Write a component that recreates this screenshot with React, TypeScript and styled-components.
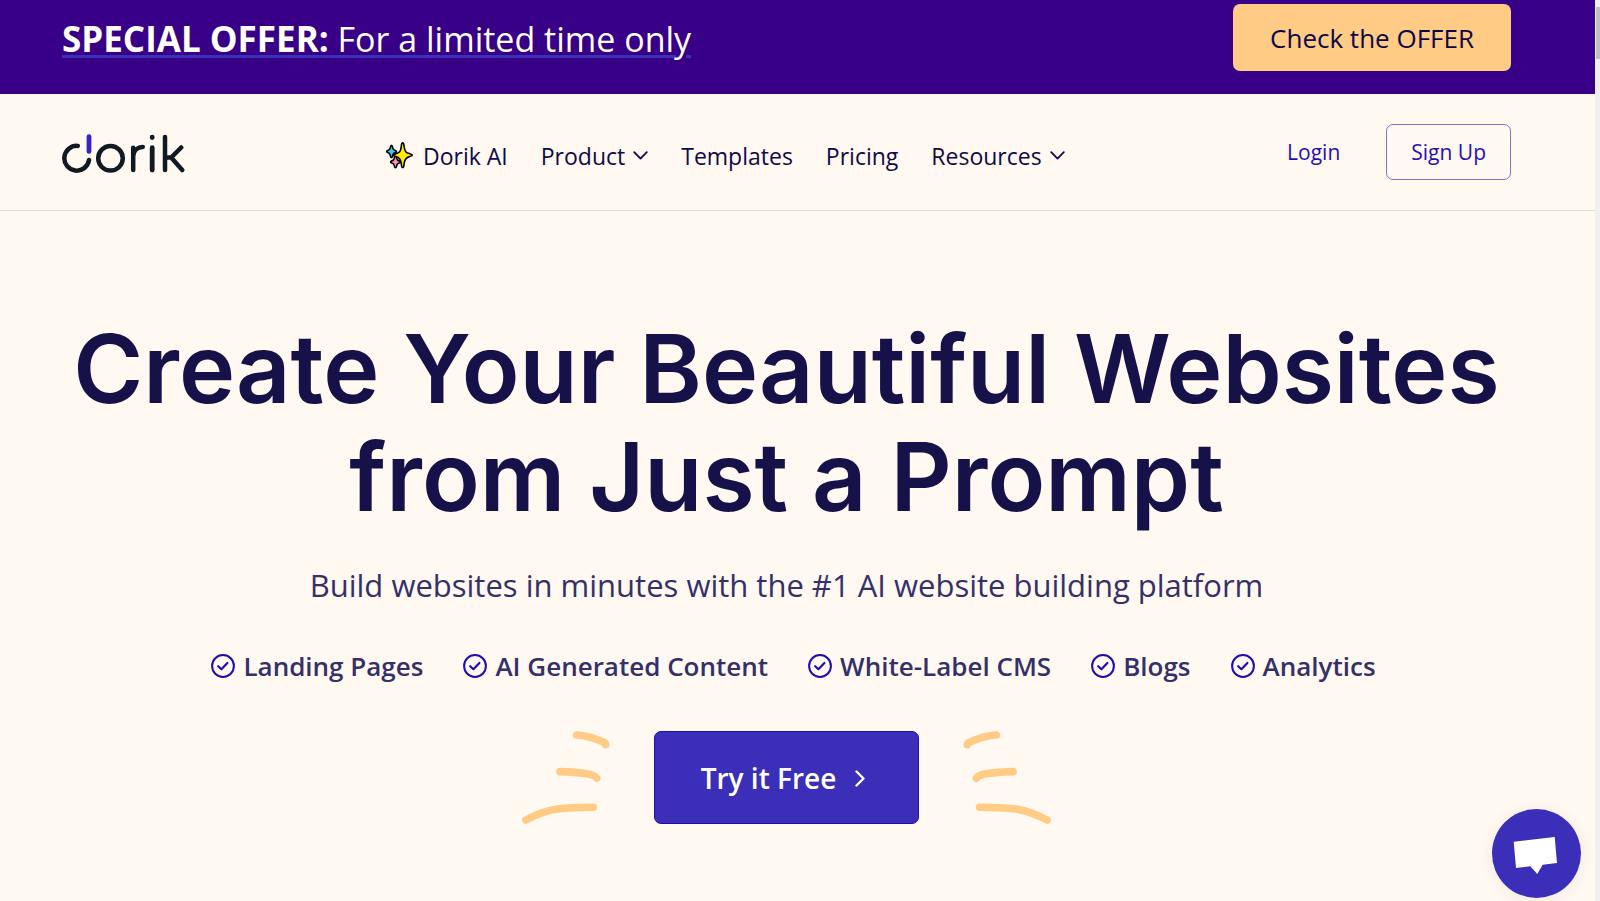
import React from "react";
import styled, { createGlobalStyle } from "styled-components";

const colors = {
  cream: "#fff9f2",
  banner: "#380086",
  brand: "#3b2fb9",
  link: "#1f10b8",
  ink: "#17114a",
  muted: "#35306a",
  amber: "#ffcb85",
};

const GlobalStyle = createGlobalStyle`
  *, *::before, *::after { box-sizing: border-box; }
  body {
    margin: 0;
    background: ${colors.cream};
    color: ${colors.ink};
    font-family: "Open Sans", "Noto Sans", sans-serif;
  }
  a { color: inherit; text-decoration: none; }
  button { font-family: inherit; cursor: pointer; }
`;

const Shell = styled.div`
  display: grid;
  grid-template-columns: minmax(0, 1fr) 5px;
  min-height: 100vh;
`;

const Page = styled.div`
  display: flex;
  flex-direction: column;
`;

const ScrollTrack = styled.div`
  padding: 7px 0 0 1px;
  background: #f0f0f1;
`;

const ScrollThumb = styled.div`
  height: 52px;
  background: #c1c1c1;
`;

const Banner = styled.div`
  display: flex;
  align-items: center;
  justify-content: space-between;
  padding: 4px 84px 23px 62px;
  background: ${colors.banner};
`;

const OfferLink = styled.a`
  padding-top: 2px;
  color: #fff;
  font-size: 34px;
  line-height: 48px;
  text-decoration: underline;
  text-decoration-color: ${colors.brand};
  text-decoration-thickness: 3px;
  text-underline-offset: 3px;
  white-space: nowrap;

  strong {
    font-size: 35px;
    font-weight: 700;
  }
`;

const OfferButton = styled.button`
  padding: 2px 37px 0;
  border: 0;
  border-radius: 7px;
  background: ${colors.amber};
  color: #0d0845;
  font-size: 26px;
  line-height: 65px;
  white-space: nowrap;
`;

const Header = styled.header`
  display: flex;
  align-items: center;
  padding: 30px 84px 30px 62px;
  border-bottom: 1px solid #dddbe0;
`;

const LogoLink = styled.a`
  display: flex;
  padding-top: 2px;
`;

const Nav = styled.nav`
  display: flex;
  align-items: center;
  gap: 33px;
  margin-left: 200px;
  padding-top: 7px;
  white-space: nowrap;
`;

const NavLink = styled.a`
  display: flex;
  align-items: center;
  gap: 8px;
  color: #0f0a48;
  font-size: 23px;
  line-height: 32px;
`;

const Actions = styled.div`
  display: flex;
  align-items: center;
  gap: 46px;
  margin-left: auto;
  color: ${colors.link};
  font-size: 21px;
  white-space: nowrap;
`;

const SignUp = styled.a`
  padding: 0 24px;
  border: 1px solid #7d74cf;
  border-radius: 7px;
  line-height: 54px;
`;

const Hero = styled.main`
  display: flex;
  flex-direction: column;
  align-items: center;
  padding: 104px 84px 0 62px;
  text-align: center;
`;

const Title = styled.h1`
  margin: 0;
  font-family: Inter, sans-serif;
  font-size: 95px;
  font-weight: 600;
  line-height: 108px;
  white-space: nowrap;
`;

const Subtitle = styled.p`
  margin: 30px 0 39px;
  color: ${colors.muted};
  font-size: 31px;
  line-height: 48px;
`;

const FeatureList = styled.ul`
  display: flex;
  gap: 40px;
  margin: 0;
  padding: 0 0 0 14px;
  list-style: none;
`;

const Feature = styled.li`
  display: flex;
  align-items: center;
  gap: 8px;
  color: ${colors.muted};
  font-size: 26px;
  font-weight: 600;
  line-height: 36px;
  white-space: nowrap;
`;

const CtaRow = styled.div`
  display: flex;
  align-items: center;
  gap: 44px;
  margin-top: 47px;
`;

const CtaButton = styled.button`
  display: flex;
  align-items: center;
  gap: 19px;
  padding: 2px 53px 0 46px;
  border: 1px solid #1d0fb0;
  border-radius: 7px;
  background: ${colors.brand};
  color: #fff;
  font-size: 28px;
  font-weight: 600;
  line-height: 89px;
  white-space: nowrap;
`;

const RaysSvg = styled.svg<{ $flipped?: boolean }>`
  transform: ${(p) => (p.$flipped ? "scaleX(-1)" : "none")};
`;

const ChatButton = styled.button`
  position: fixed;
  right: 19px;
  bottom: 3px;
  width: 89px;
  height: 89px;
  padding: 0;
  border: 0;
  border-radius: 50%;
  background: ${colors.brand};
  box-shadow: 0 2px 16px rgba(60, 40, 20, 0.08);
`;

const Logo = () => (
  <svg width="124" height="40" viewBox="0.8 0 124 40" fill="none" stroke="#111a22" strokeWidth="4.5" strokeLinecap="round" aria-hidden="true">
    <path d="M16.6 12.9A12.4 12.4 0 1 0 27.8 27" />
    <path d="M27.8 3.6V18.4" stroke="#3a22c4" strokeWidth="4.8" />
    <circle cx="49.3" cy="25.3" r="12.3" />
    <path d="M72 14.7V37M72 23C72.4 17.4 76.4 14 81.6 13.9" />
    <path d="M91 14.7V37M91 4.1V4.6" strokeWidth="4.8" />
    <path d="M103.8 3.9V37M120 14.5L110 24.6H104M110 24.6L121 37" />
  </svg>
);

const Sparkles = () => (
  <svg width="29" height="27" viewBox="0 0 29 27" stroke="#000" strokeWidth="1.6" strokeLinejoin="round" aria-hidden="true">
    <path fill="#3cc8f4" d="M5.5 3.4C6.5 3.4 6.5 4.6 6.8 6 7.2 7.6 7.700 8.200 9.200 8.500 10.900 8.900 10.900 10.200 9.200 10.600 7.700 10.900 7.200 11.500 6.800 13 6.500 14.600 6.500 15.600 5.500 15.600S4.500 14.600 4.200 13C3.800 11.500 3.300 10.900 1.800 10.600.4 10.200.4 8.900 1.800 8.500 3.300 8.200 3.800 7.600 4.200 6 4.500 4.600 4.500 3.400 5.500 3.400Z" />
    <path fill="#ff8fbc" d="M9.500 14C10.500 14 10.500 15.200 10.800 16.500 11.200 18.100 11.700 18.600 13.200 18.900 14.900 19.300 14.900 20.600 13.200 21 11.700 21.300 11.200 21.900 10.800 23.300 10.500 24.900 10.500 25.800 9.500 25.800S8.500 24.900 8.200 23.300C7.800 21.900 7.300 21.300 5.800 21 4.200 20.600 4.200 19.300 5.800 18.900 7.300 18.600 7.800 18.100 8.200 16.500 8.500 15.200 8.500 14 9.500 14Z" />
    <path fill="#ffea00" d="M16.7.9C18 .9 17.9 3 18.2 5.2 18.9 9.6 20 10.7 23.4 11.6 25.4 12.1 26.4 12.3 26.4 13.1S25.4 14.1 23.4 14.6C20 15.5 18.9 17 18.2 21 17.9 23.2 18 25.5 16.7 25.5S15.5 23.2 15.2 21C14.6 17 13.4 15.5 10 14.6 8 14.1 7.2 13.9 7.2 13.1S8 12.1 10 11.6C13.4 10.7 14.6 9.6 15.2 5.2 15.5 3 15.4.9 16.7.9Z" />
  </svg>
);

const ChevronDown = () => (
  <svg width="15" height="10" viewBox="0 0 15 10" fill="none" stroke="#0f0a48" strokeWidth="1.8" strokeLinecap="round" strokeLinejoin="round" aria-hidden="true">
    <path d="M1.2 1.2L7.5 7.6L13.8 1.2" />
  </svg>
);

const CheckBadge = () => (
  <svg width="24" height="24" viewBox="0 0 24 24" fill="none" stroke="#1d0cb8" strokeWidth="2" strokeLinecap="round" strokeLinejoin="round" aria-hidden="true">
    <circle cx="12" cy="12" r="10.9" />
    <path d="M7.2 12.2L10.4 15.2L16.4 9" strokeWidth="2.2" />
  </svg>
);

const Rays = ({ flipped }: { flipped?: boolean }) => (
  <RaysSvg $flipped={flipped} width="88" height="93" viewBox="0 0 88 93" fill="none" stroke={colors.amber} strokeWidth="7.6" strokeLinecap="round" strokeLinejoin="round" aria-hidden="true">
    <path d="M54.7 4C63 4.4 72.5 7.2 80.5 10.8Q83.6 12 83.8 13.6" />
    <path d="M38 40.6C49 41 57 41.6 65 42.8Q73 44.2 74.7 47.2" />
    <path d="M3.8 89C14 83.6 25 79.2 37 77.8C48 76.6 59 76.4 71.4 76.3" />
  </RaysSvg>
);

const features = ["Landing Pages", "AI Generated Content", "White-Label CMS", "Blogs", "Analytics"];

const navItems = [
  { label: "Dorik AI", sparkles: true },
  { label: "Product", menu: true },
  { label: "Templates" },
  { label: "Pricing" },
  { label: "Resources", menu: true },
];

export default function App() {
  return (
    <>
      <GlobalStyle />
      <Shell>
        <Page>
          <Banner>
            <OfferLink href="#offer">
              <strong>SPECIAL OFFER:</strong> For a limited time only
            </OfferLink>
            <OfferButton type="button">Check the OFFER</OfferButton>
          </Banner>
          <Header>
            <LogoLink href="#home" aria-label="Dorik home">
              <Logo />
            </LogoLink>
            <Nav>
              {navItems.map((item) => (
                <NavLink key={item.label} href="#nav">
                  {item.sparkles && <Sparkles />}
                  {item.label}
                  {item.menu && <ChevronDown />}
                </NavLink>
              ))}
            </Nav>
            <Actions>
              <a href="#login">Login</a>
              <SignUp href="#signup">Sign Up</SignUp>
            </Actions>
          </Header>
          <Hero>
            <Title>
              Create Your Beautiful Websites
              <br />
              from Just a Prompt
            </Title>
            <Subtitle>Build websites in minutes with the #1 AI website building platform</Subtitle>
            <FeatureList>
              {features.map((name) => (
                <Feature key={name}>
                  <CheckBadge />
                  {name}
                </Feature>
              ))}
            </FeatureList>
            <CtaRow>
              <Rays />
              <CtaButton type="button">
                Try it Free
                <svg width="10" height="17" viewBox="0 0 10 17" fill="none" stroke="#fff" strokeWidth="2.4" strokeLinecap="round" strokeLinejoin="round" aria-hidden="true">
                  <path d="M1.5 1.5L8.5 8.5L1.5 15.5" />
                </svg>
              </CtaButton>
              <Rays flipped />
            </CtaRow>
          </Hero>
        </Page>
        <ScrollTrack>
          <ScrollThumb />
        </ScrollTrack>
      </Shell>
      <ChatButton type="button" aria-label="Open chat">
        <svg width="89" height="89" viewBox="0 0 89 89" fill="#fff" aria-hidden="true">
          <path d="M21.7 32.7L62.7 28L65 54L50.7 55.7L45.3 65L38.3 57.2L24 59Z" />
        </svg>
      </ChatButton>
    </>
  );
}
